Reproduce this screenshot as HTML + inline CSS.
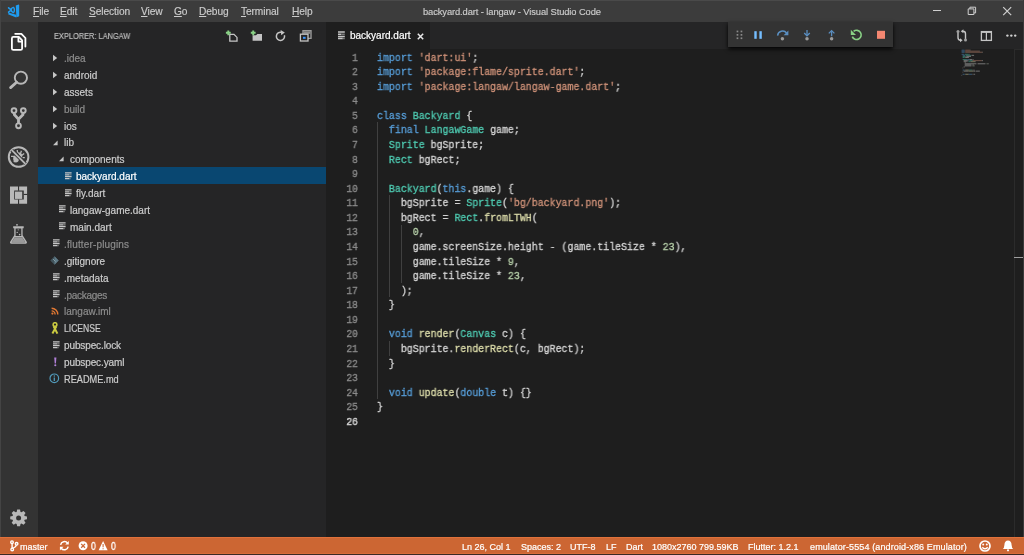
<!DOCTYPE html>
<html><head><meta charset="utf-8">
<style>
*{box-sizing:border-box}
.a{will-change:transform}html,body{margin:0;padding:0;width:1024px;height:555px;overflow:hidden;background:#1e1e1e;font-family:"Liberation Sans",sans-serif}
.a{position:absolute}
#title{left:0;top:0;width:1024px;height:22px;background:#3c3c3c}
#act{left:0;top:22px;width:38px;height:515px;background:#333333}
#side{left:38px;top:22px;width:288px;height:515px;background:#252526}
#tabs{left:326px;top:22px;width:698px;height:27px;background:#252526}
#editor{left:326px;top:49px;width:698px;height:488px;background:#1e1e1e}
#status{left:0;top:537px;width:1024px;height:18px;background:#cc6633}
.menu{top:6.3px;font-size:10.2px;color:#cccccc;white-space:nowrap;letter-spacing:-0.1px;-webkit-text-stroke:0.15px currentColor}
.menu u{text-decoration:underline;text-underline-offset:1px}
.row{left:38px;width:288px;height:17px;font-size:10px;color:#cccccc;white-space:nowrap}
.row span{position:absolute;top:3.8px;-webkit-text-stroke:0.2px currentColor}
.dim{color:#8c8c8c !important}
.code{font-family:"Liberation Mono",monospace;font-size:10.7px;white-space:pre;color:#d4d4d4;transform:scaleX(0.928);transform-origin:0 0;-webkit-text-stroke:0.32px currentColor}
.ln{font-family:"Liberation Mono",monospace;font-size:10.7px;color:#8c8c8c;text-align:right;width:30px;left:327.6px;transform:scaleX(0.919);transform-origin:100% 0;-webkit-text-stroke:0.3px currentColor}
.k{color:#569cd6}.s{color:#ce9178}.t{color:#4ec9b0}.f{color:#dcdcaa}.n{color:#b5cea8}
.st{top:541.8px;font-size:9px;color:#ffffff;white-space:nowrap;-webkit-text-stroke:0.2px currentColor}
</style></head><body>
<div id="title" class="a"></div>

<!-- title bar -->
<svg class="a" style="left:0;top:0" width="24" height="22" viewBox="0 0 24 22">
<g fill="#1f9cf0">
 <path d="M15.8 5.4 L18.6 4.4 Q19.2 4.6 19.2 5.2 V15.8 Q19.2 16.4 18.6 16.6 L16.4 17.2 Z"/>
 <path d="M8.2 13.4 L9.2 12.8 L16.2 14.8 L16.4 17.2 L15.6 17.2 L8.6 14.6 Q8 14.2 8.2 13.4 Z"/>
</g>
<g fill="none" stroke="#1f9cf0">
 <path d="M13.4 7.4 Q10.6 8.4 11 10 Q11.4 11.6 13.4 12.6 Q14.4 12.4 14.4 10 Q14.4 7.6 13.4 7.4 Z" stroke-width="1.5"/>
 <path d="M8.6 7.8 L11.2 10 L8.6 12.2" stroke-width="1.6" stroke-linecap="round"/>
</g>
</svg>
<div class="a menu" style="left:32.5px"><u>F</u>ile</div>
<div class="a menu" style="left:59.5px"><u>E</u>dit</div>
<div class="a menu" style="left:88.5px"><u>S</u>election</div>
<div class="a menu" style="left:141px"><u>V</u>iew</div>
<div class="a menu" style="left:174px"><u>G</u>o</div>
<div class="a menu" style="left:199px"><u>D</u>ebug</div>
<div class="a menu" style="left:241px"><u>T</u>erminal</div>
<div class="a menu" style="left:292px"><u>H</u>elp</div>
<div class="a menu" style="left:423px;font-size:9.36px;top:6.9px">backyard.dart - langaw - Visual Studio Code</div>
<div class="a" style="left:932.8px;top:10px;width:8px;height:1px;background:#d0d0d0"></div>
<svg class="a" style="left:967px;top:6px" width="10" height="10" viewBox="0 0 10 10"><path d="M1.2 2.9 H6.9 V8.5 H1.2 Z M2.9 2.9 V1.2 H8.6 V6.9 H6.9" fill="none" stroke="#d0d0d0" stroke-width="1"/></svg>
<svg class="a" style="left:1002px;top:6px" width="11" height="10" viewBox="0 0 11 10"><path d="M1.2 1.2 L9.2 9.2 M9.2 1.2 L1.2 9.2" stroke="#d0d0d0" stroke-width="1.2"/></svg>
<div id="act" class="a"></div>
<div id="side" class="a"></div>

<!-- activity bar icons -->
<svg class="a" style="left:0;top:22px" width="38" height="515" viewBox="0 22 38 515">
<g fill="none" stroke="#ffffff" stroke-width="1.8" stroke-linejoin="round" stroke-linecap="round">
 <path d="M15.2 33.8 H21.4 L25.4 38 V46.6"/>
 <path d="M13.4 36.9 H18.8 L22.1 40.4 V48.4 Q22.1 49.9 20.6 49.9 H13.4 Q11.9 49.9 11.9 48.4 V38.4 Q11.9 36.9 13.4 36.9 Z"/>
 <path d="M18.4 37.4 V41.6 H21.8"/>
</g>
<g fill="none" stroke="#b8b8b8">
 <circle cx="20.9" cy="77.7" r="6.1" stroke-width="1.9"/>
 <path d="M16.6 82.2 L10.6 87.6" stroke-width="2.8" stroke-linecap="round"/>
 <circle cx="14" cy="110.6" r="2.4" stroke-width="1.9"/>
 <circle cx="23.3" cy="110.6" r="2.4" stroke-width="1.9"/>
 <circle cx="18.5" cy="125.8" r="2.4" stroke-width="1.9"/>
 <path d="M14.4 113.2 V114.6 L18.5 119.2 L22.9 114.6 V113.2 M18.5 119.2 V123.4" stroke-width="2.8"/>
 <circle cx="18.6" cy="157" r="9.8" stroke-width="2"/>
</g>
<g fill="none" stroke="#b8b8b8" stroke-width="1.3">
 <path d="M17.2 150 L17.6 152.6 M21.4 150.8 L20.6 153.4 M24.2 153.4 L22.2 155 M24.8 157.6 L22.6 157.6 M11 156.4 L14.2 156.4 M13.8 162 L15.4 160.6"/>
</g>
<g fill="#b8b8b8">
 <path d="M13.2 158 Q13.4 155.2 16.4 154.6 L19.2 157.4 Q19 162.6 15.6 162.6 Q13 161.6 13.2 158 Z"/>
 <path d="M17.6 152.4 Q21 152 22.6 155.6 L21.4 158.6 Z"/>
</g>
<path d="M11.8 150.2 L25.4 163.8" stroke="#333333" stroke-width="3.6"/>
<path d="M11.8 150.2 L25.4 163.8" stroke="#b8b8b8" stroke-width="1.9"/>
<g fill="#b8b8b8">
 <path fill-rule="evenodd" d="M10 186.5 H27.1 V203.8 H10 Z M14.2 190.6 V199.6 H23.8 V190.6 Z"/>
 <rect x="15" y="191.6" width="7.2" height="7.3"/>
</g>
<g fill="#333333">
 <rect x="18" y="186" width="1.1" height="4.8"/>
 <rect x="18" y="199.4" width="1.1" height="5"/>
 <rect x="23.6" y="193.9" width="4" height="1.1"/>
</g>
<g fill="#b8b8b8">
 <path fill-rule="evenodd" d="M13.2 226.3 H23.7 V228.2 H22.6 V235.2 L26.9 242 Q27.4 243.8 25.6 243.8 H11.3 Q9.5 243.8 10 242 L14.3 235.2 V228.2 H13.2 Z M15.6 228.6 V236 H21.3 V228.6 Z M14.6 237.4 L11.6 242.2 H25.3 L22.3 237.4 Z"/>
 <path d="M14.6 237.4 L11.6 242.2 H25.3 L22.3 237.4 Z" fill="#9a9a9a"/>
 <circle cx="17" cy="224.8" r="0.9"/>
 <circle cx="18.2" cy="229.8" r="0.6"/>
 <circle cx="17.2" cy="232.4" r="0.7"/>
 <circle cx="19.6" cy="234.6" r="0.8"/>
</g>
<g fill="#b8b8b8">
 <path fill-rule="evenodd" d="M16.68 511.90 L17.16 509.52 L20.04 509.52 L20.52 511.90 L21.49 512.30 L23.50 510.96 L25.54 513.00 L24.20 515.01 L24.60 515.98 L26.98 516.46 L26.98 519.34 L24.60 519.82 L24.20 520.79 L25.54 522.80 L23.50 524.84 L21.49 523.50 L20.52 523.90 L20.04 526.28 L17.16 526.28 L16.68 523.90 L15.71 523.50 L13.70 524.84 L11.66 522.80 L13.00 520.79 L12.60 519.82 L10.22 519.34 L10.22 516.46 L12.60 515.98 L13.00 515.01 L11.66 513.00 L13.70 510.96 L15.71 512.30 Z M18.6 515.4 A2.5 2.5 0 1 0 18.6 520.4 A2.5 2.5 0 1 0 18.6 515.4 Z"/>
</g>
</svg>
<!-- sidebar -->
<div class="a" style="left:53.6px;top:31.2px;font-size:8.4px;transform:scaleX(0.886);transform-origin:0 0;color:#bbbbbb;white-space:nowrap;-webkit-text-stroke:0.2px currentColor">EXPLORER: LANGAW</div>
<div class="a row dim" style="top:48.90px;"><span style="left:26px;">.idea</span></div><svg class="a" style="left:52px;top:54.25px" width="7" height="8" viewBox="0 0 7 8"><path d="M1 0.8 L5.2 4 L1 7.2 Z" fill="#c5c5c5"/></svg>
<div class="a row" style="top:65.80px;"><span style="left:26px;">android</span></div><svg class="a" style="left:52px;top:71.15px" width="7" height="8" viewBox="0 0 7 8"><path d="M1 0.8 L5.2 4 L1 7.2 Z" fill="#c5c5c5"/></svg>
<div class="a row" style="top:82.70px;"><span style="left:26px;">assets</span></div><svg class="a" style="left:52px;top:88.05px" width="7" height="8" viewBox="0 0 7 8"><path d="M1 0.8 L5.2 4 L1 7.2 Z" fill="#c5c5c5"/></svg>
<div class="a row dim" style="top:99.60px;"><span style="left:26px;">build</span></div><svg class="a" style="left:52px;top:104.95px" width="7" height="8" viewBox="0 0 7 8"><path d="M1 0.8 L5.2 4 L1 7.2 Z" fill="#c5c5c5"/></svg>
<div class="a row" style="top:116.50px;"><span style="left:26px;">ios</span></div><svg class="a" style="left:52px;top:121.85px" width="7" height="8" viewBox="0 0 7 8"><path d="M1 0.8 L5.2 4 L1 7.2 Z" fill="#c5c5c5"/></svg>
<div class="a row" style="top:133.40px;"><span style="left:26px;">lib</span></div><svg class="a" style="left:52.2px;top:138.55px" width="7" height="8" viewBox="0 0 7 8"><path d="M5.6 1.6 V6.2 H1 Z" fill="#c5c5c5"/></svg>
<div class="a row" style="top:150.30px;"><span style="left:32px;">components</span></div><svg class="a" style="left:58.2px;top:155.45px" width="7" height="8" viewBox="0 0 7 8"><path d="M5.6 1.6 V6.2 H1 Z" fill="#c5c5c5"/></svg>
<div class="a row" style="top:167.20px;background:#094771;color:#ffffff;"><span style="left:38px;">backyard.dart</span></div><svg class="a" style="left:64.7px;top:171.65px" width="8" height="8" viewBox="0 0 8 8"><path d="M0 0.9 H6.6 M0 2.8 H4.4 M0 4.7 H6.6 M0 6.6 H4.4" stroke="#c5c5c5" stroke-width="1.3"/><path d="M4.4 2.8 H6.6 M4.4 6.6 H5.6" stroke="#8a8a8a" stroke-width="1.3"/></svg>
<div class="a row" style="top:184.10px;"><span style="left:38px;">fly.dart</span></div><svg class="a" style="left:64.7px;top:188.55px" width="8" height="8" viewBox="0 0 8 8"><path d="M0 0.9 H6.6 M0 2.8 H4.4 M0 4.7 H6.6 M0 6.6 H4.4" stroke="#c5c5c5" stroke-width="1.3"/><path d="M4.4 2.8 H6.6 M4.4 6.6 H5.6" stroke="#8a8a8a" stroke-width="1.3"/></svg>
<div class="a row" style="top:201.00px;"><span style="left:32px;">langaw-game.dart</span></div><svg class="a" style="left:58.7px;top:205.45px" width="8" height="8" viewBox="0 0 8 8"><path d="M0 0.9 H6.6 M0 2.8 H4.4 M0 4.7 H6.6 M0 6.6 H4.4" stroke="#c5c5c5" stroke-width="1.3"/><path d="M4.4 2.8 H6.6 M4.4 6.6 H5.6" stroke="#8a8a8a" stroke-width="1.3"/></svg>
<div class="a row" style="top:217.90px;"><span style="left:32px;">main.dart</span></div><svg class="a" style="left:58.7px;top:222.35px" width="8" height="8" viewBox="0 0 8 8"><path d="M0 0.9 H6.6 M0 2.8 H4.4 M0 4.7 H6.6 M0 6.6 H4.4" stroke="#c5c5c5" stroke-width="1.3"/><path d="M4.4 2.8 H6.6 M4.4 6.6 H5.6" stroke="#8a8a8a" stroke-width="1.3"/></svg>
<div class="a row dim" style="top:234.80px;"><span style="left:26px;letter-spacing:0.15px">.flutter-plugins</span></div><svg class="a" style="left:52.7px;top:239.25px" width="8" height="8" viewBox="0 0 8 8"><path d="M0 0.9 H6.6 M0 2.8 H4.4 M0 4.7 H6.6 M0 6.6 H4.4" stroke="#c5c5c5" stroke-width="1.3"/><path d="M4.4 2.8 H6.6 M4.4 6.6 H5.6" stroke="#8a8a8a" stroke-width="1.3"/></svg>
<div class="a row" style="top:251.70px;"><span style="left:26px;">.gitignore</span></div><svg class="a" style="left:50px;top:255.65px" width="9" height="9" viewBox="0 0 9 9"><path d="M4.5 0.3 L8.7 4.5 L4.5 8.7 L0.3 4.5 Z" fill="#41535b"/><path d="M4.5 0.3 L8.7 4.5 L4.5 8.7 Z" fill="#5f7a86"/><path d="M3 3 L5.5 5.5" stroke="#8fa9b5" stroke-width="0.8"/></svg>
<div class="a row" style="top:268.60px;"><span style="left:26px;">.metadata</span></div><svg class="a" style="left:52.7px;top:273.05px" width="8" height="8" viewBox="0 0 8 8"><path d="M0 0.9 H6.6 M0 2.8 H4.4 M0 4.7 H6.6 M0 6.6 H4.4" stroke="#c5c5c5" stroke-width="1.3"/><path d="M4.4 2.8 H6.6 M4.4 6.6 H5.6" stroke="#8a8a8a" stroke-width="1.3"/></svg>
<div class="a row dim" style="top:285.50px;"><span style="left:26px;letter-spacing:-0.28px">.packages</span></div><svg class="a" style="left:52.7px;top:289.95px" width="8" height="8" viewBox="0 0 8 8"><path d="M0 0.9 H6.6 M0 2.8 H4.4 M0 4.7 H6.6 M0 6.6 H4.4" stroke="#c5c5c5" stroke-width="1.3"/><path d="M4.4 2.8 H6.6 M4.4 6.6 H5.6" stroke="#8a8a8a" stroke-width="1.3"/></svg>
<div class="a row dim" style="top:302.40px;"><span style="left:26px;">langaw.iml</span></div><svg class="a" style="left:50.6px;top:306.85px" width="8" height="8" viewBox="0 0 8 8"><path d="M0.6 1.2 A6.2 6.2 0 0 1 6.8 7.4 M0.6 3.9 A3.5 3.5 0 0 1 4.1 7.4" fill="none" stroke="#e37933" stroke-width="1.4"/><circle cx="1.4" cy="6.6" r="1.1" fill="#e37933"/></svg>
<div class="a row" style="top:319.30px;"><span style="left:26px;transform:scaleX(0.856);transform-origin:0 0">LICENSE</span></div><svg class="a" style="left:50px;top:321.55px" width="10" height="13" viewBox="0 0 10 13"><circle cx="5" cy="2.6" r="1.9" fill="none" stroke="#cbcb41" stroke-width="1.5"/><path d="M3.6 4.2 L7.4 11.6 M6.4 4.2 L2.4 11.6" fill="none" stroke="#cbcb41" stroke-width="2"/></svg>
<div class="a row" style="top:336.20px;"><span style="left:26px;letter-spacing:-0.12px">pubspec.lock</span></div><svg class="a" style="left:52.7px;top:340.65px" width="8" height="8" viewBox="0 0 8 8"><path d="M0 0.9 H6.6 M0 2.8 H4.4 M0 4.7 H6.6 M0 6.6 H4.4" stroke="#c5c5c5" stroke-width="1.3"/><path d="M4.4 2.8 H6.6 M4.4 6.6 H5.6" stroke="#8a8a8a" stroke-width="1.3"/></svg>
<div class="a row" style="top:353.10px;"><span style="left:26px;letter-spacing:-0.12px">pubspec.yaml</span></div><svg class="a" style="left:52.5px;top:356.75px" width="5" height="10" viewBox="0 0 5 10"><path d="M1.2 0.4 H3.4 L2.9 6.4 H1.7 Z" fill="#b180d7"/><circle cx="2.3" cy="8.3" r="1.05" fill="#b180d7"/></svg>
<div class="a row" style="top:370.00px;"><span style="left:26px;transform:scaleX(0.92);transform-origin:0 0">README.md</span></div><svg class="a" style="left:49.3px;top:373.25px" width="11" height="11" viewBox="0 0 11 11"><circle cx="5.3" cy="5.3" r="4.3" fill="none" stroke="#519aba" stroke-width="1.2"/><path d="M5.3 4.5 V8" stroke="#519aba" stroke-width="1.3"/><circle cx="5.3" cy="2.9" r="0.75" fill="#519aba"/></svg>
<div id="tabs" class="a"></div>
<div id="editor" class="a"></div>
<!-- tabs -->
<div class="a" style="left:326px;top:22px;width:104px;height:27px;background:#1e1e1e"></div>
<svg class="a" style="left:338.3px;top:31.4px" width="8" height="9" viewBox="0 0 8 9"><path d="M0 1 H6.8 M0 3.2 H3.4 M0 5.4 H6.8 M0 7.6 H4.8" stroke="#c5c5c5" stroke-width="1.5"/><path d="M3.4 3.2 H6.8 M4.8 7.6 H6.8" stroke="#7a7a7a" stroke-width="1.5"/></svg>
<div class="a" style="left:350px;top:29.8px;font-size:10px;color:#ffffff;white-space:nowrap;-webkit-text-stroke:0.2px #fff">backyard.dart</div>
<svg class="a" style="left:417px;top:32.5px" width="7" height="7" viewBox="0 0 7 7"><path d="M0.8 0.8 L6.2 6.2 M6.2 0.8 L0.8 6.2" stroke="#e8e8e8" stroke-width="1.5"/></svg>
<!-- code -->
<div class="a" style="left:377px;top:122.48px;width:1px;height:276.94px;background:#404040"></div>
<div class="a" style="left:389px;top:195.36px;width:1px;height:102.03px;background:#404040"></div>
<div class="a" style="left:389px;top:341.12px;width:1px;height:14.58px;background:#404040"></div>
<div class="a" style="left:401px;top:224.51px;width:1px;height:58.30px;background:#404040"></div>
<div class="a ln" style="top:50.50px;height:14.576px;line-height:14.576px;color:#8c8c8c">1</div>
<div class="a code" style="left:377px;top:50.50px;height:14.576px;line-height:14.576px"><span class="k">import</span> <span class="s">&#x27;dart:ui&#x27;</span>;</div>
<div class="a ln" style="top:65.08px;height:14.576px;line-height:14.576px;color:#8c8c8c">2</div>
<div class="a code" style="left:377px;top:65.08px;height:14.576px;line-height:14.576px"><span class="k">import</span> <span class="s">&#x27;package:flame/sprite.dart&#x27;</span>;</div>
<div class="a ln" style="top:79.65px;height:14.576px;line-height:14.576px;color:#8c8c8c">3</div>
<div class="a code" style="left:377px;top:79.65px;height:14.576px;line-height:14.576px"><span class="k">import</span> <span class="s">&#x27;package:langaw/langaw-game.dart&#x27;</span>;</div>
<div class="a ln" style="top:94.23px;height:14.576px;line-height:14.576px;color:#8c8c8c">4</div>
<div class="a ln" style="top:108.80px;height:14.576px;line-height:14.576px;color:#8c8c8c">5</div>
<div class="a code" style="left:377px;top:108.80px;height:14.576px;line-height:14.576px"><span class="k">class</span> <span class="t">Backyard</span> {</div>
<div class="a ln" style="top:123.38px;height:14.576px;line-height:14.576px;color:#8c8c8c">6</div>
<div class="a code" style="left:377px;top:123.38px;height:14.576px;line-height:14.576px">  <span class="k">final</span> <span class="t">LangawGame</span> game;</div>
<div class="a ln" style="top:137.96px;height:14.576px;line-height:14.576px;color:#8c8c8c">7</div>
<div class="a code" style="left:377px;top:137.96px;height:14.576px;line-height:14.576px">  <span class="t">Sprite</span> bgSprite;</div>
<div class="a ln" style="top:152.53px;height:14.576px;line-height:14.576px;color:#8c8c8c">8</div>
<div class="a code" style="left:377px;top:152.53px;height:14.576px;line-height:14.576px">  <span class="t">Rect</span> bgRect;</div>
<div class="a ln" style="top:167.11px;height:14.576px;line-height:14.576px;color:#8c8c8c">9</div>
<div class="a ln" style="top:181.68px;height:14.576px;line-height:14.576px;color:#8c8c8c">10</div>
<div class="a code" style="left:377px;top:181.68px;height:14.576px;line-height:14.576px">  <span class="t">Backyard</span>(<span class="k">this</span>.game) {</div>
<div class="a ln" style="top:196.26px;height:14.576px;line-height:14.576px;color:#8c8c8c">11</div>
<div class="a code" style="left:377px;top:196.26px;height:14.576px;line-height:14.576px">    bgSprite = <span class="t">Sprite</span>(<span class="s">&#x27;bg/backyard.png&#x27;</span>);</div>
<div class="a ln" style="top:210.84px;height:14.576px;line-height:14.576px;color:#8c8c8c">12</div>
<div class="a code" style="left:377px;top:210.84px;height:14.576px;line-height:14.576px">    bgRect = <span class="t">Rect</span>.<span class="f">fromLTWH</span>(</div>
<div class="a ln" style="top:225.41px;height:14.576px;line-height:14.576px;color:#8c8c8c">13</div>
<div class="a code" style="left:377px;top:225.41px;height:14.576px;line-height:14.576px">      <span class="n">0</span>,</div>
<div class="a ln" style="top:239.99px;height:14.576px;line-height:14.576px;color:#8c8c8c">14</div>
<div class="a code" style="left:377px;top:239.99px;height:14.576px;line-height:14.576px">      game.screenSize.height - (game.tileSize * <span class="n">23</span>),</div>
<div class="a ln" style="top:254.56px;height:14.576px;line-height:14.576px;color:#8c8c8c">15</div>
<div class="a code" style="left:377px;top:254.56px;height:14.576px;line-height:14.576px">      game.tileSize * <span class="n">9</span>,</div>
<div class="a ln" style="top:269.14px;height:14.576px;line-height:14.576px;color:#8c8c8c">16</div>
<div class="a code" style="left:377px;top:269.14px;height:14.576px;line-height:14.576px">      game.tileSize * <span class="n">23</span>,</div>
<div class="a ln" style="top:283.72px;height:14.576px;line-height:14.576px;color:#8c8c8c">17</div>
<div class="a code" style="left:377px;top:283.72px;height:14.576px;line-height:14.576px">    );</div>
<div class="a ln" style="top:298.29px;height:14.576px;line-height:14.576px;color:#8c8c8c">18</div>
<div class="a code" style="left:377px;top:298.29px;height:14.576px;line-height:14.576px">  }</div>
<div class="a ln" style="top:312.87px;height:14.576px;line-height:14.576px;color:#8c8c8c">19</div>
<div class="a ln" style="top:327.44px;height:14.576px;line-height:14.576px;color:#8c8c8c">20</div>
<div class="a code" style="left:377px;top:327.44px;height:14.576px;line-height:14.576px">  <span class="k">void</span> <span class="f">render</span>(<span class="t">Canvas</span> c) {</div>
<div class="a ln" style="top:342.02px;height:14.576px;line-height:14.576px;color:#8c8c8c">21</div>
<div class="a code" style="left:377px;top:342.02px;height:14.576px;line-height:14.576px">    bgSprite.<span class="f">renderRect</span>(c, bgRect);</div>
<div class="a ln" style="top:356.60px;height:14.576px;line-height:14.576px;color:#8c8c8c">22</div>
<div class="a code" style="left:377px;top:356.60px;height:14.576px;line-height:14.576px">  }</div>
<div class="a ln" style="top:371.17px;height:14.576px;line-height:14.576px;color:#8c8c8c">23</div>
<div class="a ln" style="top:385.75px;height:14.576px;line-height:14.576px;color:#8c8c8c">24</div>
<div class="a code" style="left:377px;top:385.75px;height:14.576px;line-height:14.576px">  <span class="k">void</span> <span class="f">update</span>(<span class="k">double</span> t) {}</div>
<div class="a ln" style="top:400.32px;height:14.576px;line-height:14.576px;color:#8c8c8c">25</div>
<div class="a code" style="left:377px;top:400.32px;height:14.576px;line-height:14.576px">}</div>
<div class="a ln" style="top:414.90px;height:14.576px;line-height:14.576px;color:#d0d0d0;-webkit-text-stroke:0.45px #d0d0d0">26</div>
<div id="status" class="a"></div>


<!-- sidebar header actions -->
<svg class="a" style="left:220px;top:26px" width="100" height="20" viewBox="220 26 100 20">
 <path d="M229.8 34.4 H234 L237 37.4 V41.2 H229.8 Z" fill="none" stroke="#c5c5c5" stroke-width="1.3"/>
 <path d="M228.3 30.4 V35.2 M225.9 32.8 H230.7" stroke="#89d185" stroke-width="1.9"/>
 <path d="M252.6 35.2 H256 L257.4 34 H262 V40.8 H252.6 Z" fill="#c5c5c5"/>
 <path d="M253.2 30.4 V35.2 M250.8 32.8 H255.6" stroke="#89d185" stroke-width="1.9"/>
 <path d="M284.4 35.2 A4.1 4.1 0 1 1 281.6 32.4" fill="none" stroke="#c5c5c5" stroke-width="1.5"/>
 <path d="M280.6 30 L284.8 32.6 L281.2 35.2 Z" fill="#c5c5c5"/>
 <path d="M303 34 V30.8 H311 V38.4 H308" fill="none" stroke="#9a9a9a" stroke-width="1.4"/><rect x="303.6" y="31.4" width="6.8" height="2.4" fill="#8a8a8a"/>
 <rect x="300.4" y="34.2" width="7.6" height="6.8" fill="none" stroke="#c5c5c5" stroke-width="1.3"/>
 <rect x="303" y="36.8" width="2.6" height="2" fill="#3794ff"/>
</svg>
<!-- editor actions -->
<svg class="a" style="left:940px;top:24px" width="84" height="24" viewBox="940 24 84 24">
 <g fill="none" stroke="#c5c5c5" stroke-width="1.4">
  <path d="M958 32.2 V37.6 Q958 40.3 960.4 40.3"/>
  <path d="M965.5 39.4 V33.8 Q965.5 31.2 963 31.2"/>
  <rect x="981.4" y="31.6" width="10" height="8.8" stroke-width="1.3"/>
  <path d="M986.4 31.6 V40.4" stroke-width="1.2"/>
  <path d="M981.4 32 H991.4" stroke-width="1.8"/>
 </g>
 <circle cx="958" cy="31.6" r="1.5" fill="#a0a0a0"/>
 <circle cx="965.5" cy="40" r="1.5" fill="#a0a0a0"/>
 <path d="M960 38.2 L962.6 40.3 L960 42.3 Z" fill="#c5c5c5"/>
 <path d="M963.4 29.2 L960.8 31.2 L963.4 33.2 Z" fill="#c5c5c5"/>
 <circle cx="1007.4" cy="35.6" r="1.2" fill="#d0d0d0"/>
 <circle cx="1011.3" cy="35.6" r="1.2" fill="#d0d0d0"/>
 <circle cx="1015.2" cy="35.6" r="1.2" fill="#d0d0d0"/>
</svg>
<!-- minimap -->
<div class="a" style="left:1014px;top:49px;width:1px;height:488px;background:#2b2b2b"></div>
<svg class="a" style="left:958px;top:46px" width="40" height="34" viewBox="958 46 40 34"><g opacity="0.45"><rect x="961.60" y="49.60" width="3.12" height="1.05" fill="#569cd6"/><rect x="965.24" y="49.60" width="4.68" height="1.05" fill="#ce9178"/><rect x="969.92" y="49.60" width="0.52" height="1.05" fill="#d4d4d4"/><rect x="961.60" y="50.65" width="3.12" height="1.05" fill="#569cd6"/><rect x="965.24" y="50.65" width="14.04" height="1.05" fill="#ce9178"/><rect x="979.28" y="50.65" width="0.52" height="1.05" fill="#d4d4d4"/><rect x="961.60" y="51.70" width="3.12" height="1.05" fill="#569cd6"/><rect x="965.24" y="51.70" width="17.16" height="1.05" fill="#ce9178"/><rect x="982.40" y="51.70" width="0.52" height="1.05" fill="#d4d4d4"/><rect x="961.60" y="53.80" width="2.60" height="1.05" fill="#569cd6"/><rect x="964.72" y="53.80" width="4.16" height="1.05" fill="#4ec9b0"/><rect x="969.40" y="53.80" width="0.52" height="1.05" fill="#d4d4d4"/><rect x="962.64" y="54.85" width="2.60" height="1.05" fill="#569cd6"/><rect x="965.76" y="54.85" width="5.20" height="1.05" fill="#4ec9b0"/><rect x="971.48" y="54.85" width="2.60" height="1.05" fill="#d4d4d4"/><rect x="962.64" y="55.90" width="3.12" height="1.05" fill="#4ec9b0"/><rect x="966.28" y="55.90" width="4.68" height="1.05" fill="#d4d4d4"/><rect x="962.64" y="56.95" width="2.08" height="1.05" fill="#4ec9b0"/><rect x="965.24" y="56.95" width="3.64" height="1.05" fill="#d4d4d4"/><rect x="962.64" y="59.05" width="4.16" height="1.05" fill="#4ec9b0"/><rect x="966.80" y="59.05" width="0.52" height="1.05" fill="#d4d4d4"/><rect x="967.32" y="59.05" width="2.08" height="1.05" fill="#569cd6"/><rect x="969.40" y="59.05" width="3.12" height="1.05" fill="#d4d4d4"/><rect x="973.04" y="59.05" width="0.52" height="1.05" fill="#d4d4d4"/><rect x="963.68" y="60.10" width="4.16" height="1.05" fill="#d4d4d4"/><rect x="968.36" y="60.10" width="0.52" height="1.05" fill="#d4d4d4"/><rect x="969.40" y="60.10" width="3.12" height="1.05" fill="#4ec9b0"/><rect x="972.52" y="60.10" width="0.52" height="1.05" fill="#d4d4d4"/><rect x="973.04" y="60.10" width="8.84" height="1.05" fill="#ce9178"/><rect x="981.88" y="60.10" width="1.04" height="1.05" fill="#d4d4d4"/><rect x="963.68" y="61.15" width="3.12" height="1.05" fill="#d4d4d4"/><rect x="967.32" y="61.15" width="0.52" height="1.05" fill="#d4d4d4"/><rect x="968.36" y="61.15" width="2.08" height="1.05" fill="#4ec9b0"/><rect x="970.44" y="61.15" width="0.52" height="1.05" fill="#d4d4d4"/><rect x="970.96" y="61.15" width="4.16" height="1.05" fill="#dcdcaa"/><rect x="975.12" y="61.15" width="0.52" height="1.05" fill="#d4d4d4"/><rect x="964.72" y="62.20" width="0.52" height="1.05" fill="#b5cea8"/><rect x="965.24" y="62.20" width="0.52" height="1.05" fill="#d4d4d4"/><rect x="964.72" y="63.25" width="11.44" height="1.05" fill="#d4d4d4"/><rect x="976.68" y="63.25" width="0.52" height="1.05" fill="#d4d4d4"/><rect x="977.72" y="63.25" width="7.28" height="1.05" fill="#d4d4d4"/><rect x="985.52" y="63.25" width="0.52" height="1.05" fill="#d4d4d4"/><rect x="986.56" y="63.25" width="1.04" height="1.05" fill="#b5cea8"/><rect x="987.60" y="63.25" width="1.04" height="1.05" fill="#d4d4d4"/><rect x="964.72" y="64.30" width="6.76" height="1.05" fill="#d4d4d4"/><rect x="972.00" y="64.30" width="0.52" height="1.05" fill="#d4d4d4"/><rect x="973.04" y="64.30" width="0.52" height="1.05" fill="#b5cea8"/><rect x="973.56" y="64.30" width="0.52" height="1.05" fill="#d4d4d4"/><rect x="964.72" y="65.35" width="6.76" height="1.05" fill="#d4d4d4"/><rect x="972.00" y="65.35" width="0.52" height="1.05" fill="#d4d4d4"/><rect x="973.04" y="65.35" width="1.04" height="1.05" fill="#b5cea8"/><rect x="974.08" y="65.35" width="0.52" height="1.05" fill="#d4d4d4"/><rect x="963.68" y="66.40" width="1.04" height="1.05" fill="#d4d4d4"/><rect x="962.64" y="67.45" width="0.52" height="1.05" fill="#d4d4d4"/><rect x="962.64" y="69.55" width="2.08" height="1.05" fill="#569cd6"/><rect x="965.24" y="69.55" width="3.12" height="1.05" fill="#dcdcaa"/><rect x="968.36" y="69.55" width="0.52" height="1.05" fill="#d4d4d4"/><rect x="968.88" y="69.55" width="3.12" height="1.05" fill="#4ec9b0"/><rect x="972.52" y="69.55" width="1.04" height="1.05" fill="#d4d4d4"/><rect x="974.08" y="69.55" width="0.52" height="1.05" fill="#d4d4d4"/><rect x="963.68" y="70.60" width="4.68" height="1.05" fill="#d4d4d4"/><rect x="968.36" y="70.60" width="5.20" height="1.05" fill="#dcdcaa"/><rect x="973.56" y="70.60" width="1.56" height="1.05" fill="#d4d4d4"/><rect x="975.64" y="70.60" width="4.16" height="1.05" fill="#d4d4d4"/><rect x="962.64" y="71.65" width="0.52" height="1.05" fill="#d4d4d4"/><rect x="962.64" y="73.75" width="2.08" height="1.05" fill="#569cd6"/><rect x="965.24" y="73.75" width="3.12" height="1.05" fill="#dcdcaa"/><rect x="968.36" y="73.75" width="0.52" height="1.05" fill="#d4d4d4"/><rect x="968.88" y="73.75" width="3.12" height="1.05" fill="#569cd6"/><rect x="972.52" y="73.75" width="1.04" height="1.05" fill="#d4d4d4"/><rect x="974.08" y="73.75" width="1.04" height="1.05" fill="#d4d4d4"/><rect x="961.60" y="74.80" width="0.52" height="1.05" fill="#d4d4d4"/></g></svg>
<!-- debug toolbar -->
<div class="a" style="left:728px;top:22px;width:165px;height:24.5px;background:#333333;box-shadow:0 2px 4px rgba(0,0,0,1)"></div>
<svg class="a" style="left:728px;top:22px" width="165" height="25" viewBox="728 22 165 25">
 <g fill="#8a8a8a">
  <rect x="736.6" y="30.6" width="1.7" height="1.7"/><rect x="740.6" y="30.6" width="1.7" height="1.7"/>
  <rect x="736.6" y="34" width="1.7" height="1.7"/><rect x="740.6" y="34" width="1.7" height="1.7"/>
  <rect x="736.6" y="37.4" width="1.7" height="1.7"/><rect x="740.6" y="37.4" width="1.7" height="1.7"/>
 </g>
 <rect x="754.3" y="31.2" width="2.4" height="7.6" fill="#75beff"/>
 <rect x="759.4" y="31.2" width="2.4" height="7.6" fill="#75beff"/>
 <path d="M777.6 35.6 A5 5 0 0 1 786.6 33" fill="none" stroke="#5a8ec0" stroke-width="1.5"/>
 <path d="M788.4 30.4 V35.2 H783.6 Z" fill="#5a8ec0"/>
 <circle cx="782.4" cy="38.8" r="1.75" fill="#9c9c9c"/>
 <path d="M807 30 V35.2" stroke="#5a8ec0" stroke-width="1.3"/>
 <path d="M804.2 33 L807 35.8 L809.8 33" fill="none" stroke="#5a8ec0" stroke-width="1.3"/>
 <circle cx="807" cy="38.8" r="1.75" fill="#9c9c9c"/>
 <path d="M831.6 31.2 V36.2" stroke="#5a8ec0" stroke-width="1.3"/>
 <path d="M828.8 33.4 L831.6 30.6 L834.4 33.4" fill="none" stroke="#5a8ec0" stroke-width="1.3"/>
 <circle cx="831.6" cy="38.8" r="1.75" fill="#9c9c9c"/>
 <path d="M853.6 31.4 A4.6 4.6 0 1 1 852.3 36.6" fill="none" stroke="#89d185" stroke-width="1.6"/>
 <path d="M850.8 29.8 L850.8 35 L856 35 Z" fill="#89d185"/>
 <rect x="877" y="30.8" width="8" height="8" fill="#f48771"/>
</svg>
<!-- status bar items -->
<svg class="a" style="left:0;top:537px" width="1024" height="18" viewBox="0 537 1024 18">
<g fill="none" stroke="#ffffff" stroke-width="1.4">
 <circle cx="12" cy="542.2" r="1.3"/>
 <circle cx="16.6" cy="543.8" r="1.3"/>
 <circle cx="12.2" cy="549.4" r="1.3"/>
 <path d="M12.1 543.5 V548.1 M16.4 545.1 Q16 547.2 12.8 548.4"/>
</g>
<g fill="none" stroke="#ffffff" stroke-width="1.5">
 <path d="M60.6 544.8 A3.9 3.9 0 0 1 67.6 543.2"/>
 <path d="M68.2 546.6 A3.9 3.9 0 0 1 61.2 548.2"/>
</g>
<path d="M68.8 541 V544.6 H65.2 Z M59.9 550.4 V546.8 H63.5 Z" fill="#ffffff"/>
<circle cx="83.1" cy="545.8" r="4.5" fill="#ffffff"/>
<path d="M81.2 543.9 L85 547.7 M85 543.9 L81.2 547.7" stroke="#cc6633" stroke-width="1.3"/>
<path d="M103.1 541 L107.6 550.3 H98.6 Z" fill="#ffffff"/>
<path d="M103.1 544 V547.2 M103.1 548.2 V549.2" stroke="#cc6633" stroke-width="1.1"/>
<circle cx="985" cy="546" r="5" fill="none" stroke="#ffffff" stroke-width="1.7"/>
<circle cx="983.2" cy="544.4" r="1" fill="#ffffff"/>
<circle cx="986.8" cy="544.4" r="1" fill="#ffffff"/>
<path d="M982.3 547.2 Q985 550.4 987.7 547.2" fill="none" stroke="#ffffff" stroke-width="1.4"/>
<path d="M1008 540.5 Q1004.6 540.5 1004.4 545 Q1004.2 548 1002.8 549 H1013.2 Q1011.8 548 1011.6 545 Q1011.4 540.5 1008 540.5 Z" fill="#ffffff"/>
<circle cx="1008" cy="550.3" r="1.1" fill="#ffffff"/>
</g>
</svg>
<div class="a st" style="left:20.3px">master</div>
<div class="a st" style="left:90.9px;font-size:10.2px;top:540.6px;transform:scaleX(0.85);transform-origin:0 0;-webkit-text-stroke:0.35px #fff">0</div>
<div class="a st" style="left:111px;font-size:10.2px;top:540.6px;transform:scaleX(0.85);transform-origin:0 0;-webkit-text-stroke:0.35px #fff">0</div>
<div class="a st" style="left:462.4px">Ln 26, Col 1</div>
<div class="a st" style="left:521px">Spaces: 2</div>
<div class="a st" style="left:570px">UTF-8</div>
<div class="a st" style="left:606px">LF</div>
<div class="a st" style="left:626px">Dart</div>
<div class="a st" style="left:652px">1080x2760 799.59KB</div>
<div class="a st" style="left:747.5px">Flutter: 1.2.1</div>
<div class="a st" style="left:809.6px;letter-spacing:0.12px">emulator-5554 (android-x86 Emulator)</div>

<!-- window borders -->
<div class="a" style="left:1014px;top:257.4px;width:9px;height:1.4px;background:#9e9e9e"></div>
<div class="a" style="left:0;top:0;width:1024px;height:1px;background:#4a4a4a"></div>
<div class="a" style="left:0;top:0;width:1px;height:537px;background:#444444"></div>
<div class="a" style="left:1023px;top:0;width:1px;height:537px;background:#3a3a3a"></div>
<div class="a" style="left:1014px;top:49px;width:9px;height:1px;background:#2b2b2b"></div>
<div class="a" style="left:0;top:537px;width:1024px;height:1px;background:#e0713b"></div>
<div class="a" style="left:0;top:553px;width:1024px;height:1px;background:#d96c38"></div>
<div class="a" style="left:0;top:554px;width:1024px;height:1px;background:#3b2a22"></div>
</body></html>
